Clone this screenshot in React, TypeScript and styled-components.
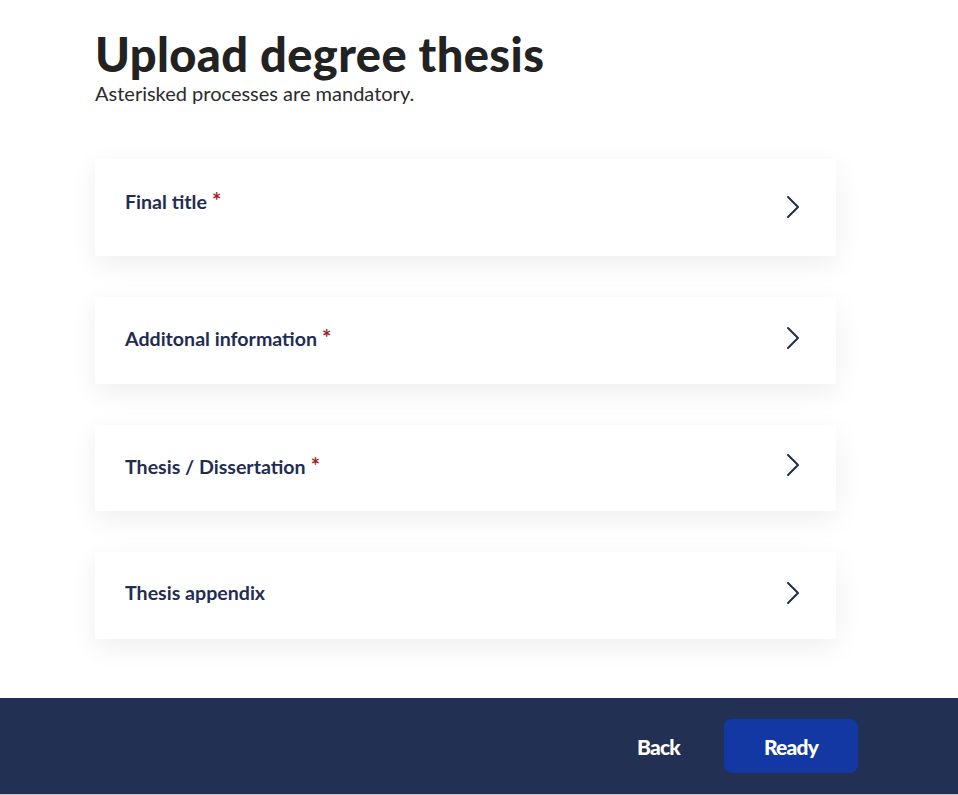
import { createGlobalStyle } from "styled-components"
import styled from "styled-components"

const GlobalStyle = createGlobalStyle`
  html, body {
    margin: 0;
    padding: 0;
    background: #ffffff;
    font-family: Lato, "Open Sans", Arial, sans-serif;
  }
  body {
    border-bottom: 1px solid #c8c8c8;
  }
`

const Page = styled.div`
  display: flex;
  flex-direction: column;
  min-height: 794px;
`

const Main = styled.main`
  flex: 1;
  padding: 27px 0 0 95px;
  width: 741px;
`

const Title = styled.h1`
  margin: 0;
  font-family: Lato, sans-serif;
  font-weight: 900;
  font-size: 47px;
  line-height: 54px;
  color: #222222;
  letter-spacing: 0.4px;
`

const Subtitle = styled.p`
  margin: 0;
  font-size: 20px;
  line-height: 24px;
  color: #2b2b2b;
`

const StepList = styled.div`
  display: flex;
  flex-direction: column;
  gap: 41px;
  margin-top: 54px;
`

const StepCard = styled.button<{ $tall?: boolean }>`
  display: flex;
  align-items: ${(p) => (p.$tall ? "flex-start" : "center")};
  justify-content: space-between;
  width: 741px;
  height: ${(p) => (p.$tall ? "97px" : "86.5px")};
  padding: ${(p) => (p.$tall ? "28px 36px 0 30px" : "0 36px 5px 30px")};
  box-sizing: border-box;
  border: none;
  border-radius: 2px;
  background: #ffffff;
  box-shadow: 0 8px 28px rgba(0, 0, 0, 0.07);
  cursor: pointer;
  text-align: left;
`

const StepLabel = styled.span`
  font-family: Lato, sans-serif;
  font-weight: 700;
  font-size: 19.6px;
  color: #1f2d52;
`

const Required = styled.span`
  color: #a01c24;
  font-size: 22px;
  margin-left: 5px;
  vertical-align: 0;
`

const Chevron = styled.span<{ $tall?: boolean }>`
  display: flex;
  margin-top: ${(p) => (p.$tall ? "8px" : "0")};
`

const Footer = styled.footer`
  display: flex;
  justify-content: flex-end;
  align-items: center;
  gap: 44px;
  height: 96px;
  padding-right: 100px;
  background: #213053;
`

const BackButton = styled.button`
  border: none;
  background: transparent;
  color: #ffffff;
  font-family: Lato, sans-serif;
  font-weight: 900;
  font-size: 21px;
  letter-spacing: -0.8px;
  cursor: pointer;
  padding: 0;
`

const ReadyButton = styled.button`
  width: 134px;
  height: 54px;
  border: none;
  border-radius: 8px;
  background: #1338a3;
  color: #ffffff;
  font-family: Lato, sans-serif;
  font-weight: 900;
  font-size: 21px;
  letter-spacing: -0.8px;
  cursor: pointer;
`

const ChevronIcon = () => (
  <svg width="14" height="24" viewBox="0 0 14 24" fill="none">
    <path d="M2 2 L12 12 L2 22" stroke="#1f2d52" strokeWidth="2" strokeLinecap="round" strokeLinejoin="round" />
  </svg>
)

const steps = [
  { label: "Final title", required: true, tall: true },
  { label: "Additonal information", required: true },
  { label: "Thesis / Dissertation", required: true },
  { label: "Thesis appendix", required: false },
]

const App = () => {
  return (
    <Page>
      <GlobalStyle />
      <Main>
        <Title>Upload degree thesis</Title>
        <Subtitle>Asterisked processes are mandatory.</Subtitle>
        <StepList>
          {steps.map((s) => (
            <StepCard key={s.label} $tall={s.tall}>
              <StepLabel>
                {s.label}
                {s.required && <Required>*</Required>}
              </StepLabel>
              <Chevron $tall={s.tall}>
                <ChevronIcon />
              </Chevron>
            </StepCard>
          ))}
        </StepList>
      </Main>
      <Footer>
        <BackButton>Back</BackButton>
        <ReadyButton>Ready</ReadyButton>
      </Footer>
    </Page>
  )
}

export default App
